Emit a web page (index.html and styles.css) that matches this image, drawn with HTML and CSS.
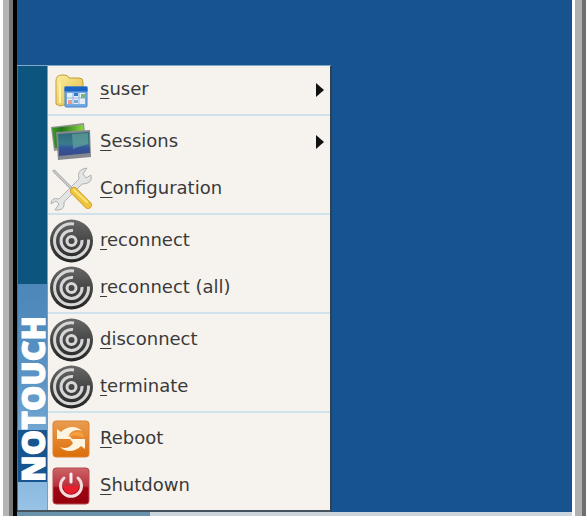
FILE: index.html
```html
<!DOCTYPE html>
<html lang="en">
<head>
<meta charset="utf-8">
<title>NoTouch desktop menu</title>
<link rel="stylesheet" href="styles.css">
</head>
<body>
<svg class="defs" aria-hidden="true">
  <defs>
    <linearGradient id="dark" x1="0" y1="0" x2="0" y2="1"><stop offset="0" stop-color="#686868"/><stop offset="1" stop-color="#242424"/></linearGradient>
    <linearGradient id="folder" x1="0" y1="0" x2="1" y2="1"><stop offset="0" stop-color="#fbefa0"/><stop offset="1" stop-color="#dfb73e"/></linearGradient>
    <linearGradient id="green" x1="0" y1="0" x2="1" y2="0"><stop offset="0" stop-color="#3d9a2c"/><stop offset=".3" stop-color="#237616"/><stop offset="1" stop-color="#90d64c"/></linearGradient>
    <linearGradient id="screen" x1="0" y1="0" x2="0" y2="1"><stop offset="0" stop-color="#2f6878"/><stop offset=".5" stop-color="#3a7c8c"/><stop offset=".65" stop-color="#31559a"/><stop offset="1" stop-color="#3a4a8a"/></linearGradient>
    <linearGradient id="orange" x1="0" y1="0" x2="0" y2="1"><stop offset="0" stop-color="#ea9c50"/><stop offset="1" stop-color="#dd6e0a"/></linearGradient>
    <linearGradient id="red" x1="0" y1="0" x2="0" y2="1"><stop offset="0" stop-color="#cc6468"/><stop offset=".5" stop-color="#b9303c"/><stop offset=".55" stop-color="#9d0512"/><stop offset="1" stop-color="#96000c"/></linearGradient>
    <symbol id="receiver" viewBox="0 0 44 44">
      <circle cx="21.500" cy="22" r="21.500" fill="url(#dark)"/>
      <g fill="none" stroke="#d6d6d6" stroke-width="3">
        <circle cx="21.500" cy="22" r="4.500"/>
        <path d="M23 11.500A10.500 10.500 0 1 0 32 21"/>
        <path d="M24 5A17 17 0 1 0 38.500 20.500"/>
      </g>
    </symbol>
  </defs>
</svg>
<div class="screen">
  <main class="desktop">
    <nav class="menu" aria-label="Desktop menu">
      <div class="brand"><span class="brand-text"><span class="brand-no">NO</span>TOUCH</span></div>
      <div class="items">
        <div class="group">
          <button class="item" aria-haspopup="menu">
            <svg class="icon" viewBox="0 0 44 44" aria-hidden="true">
              <path d="M6 36V13q0-6 6-6h2q4 0 5 3h10q4 0 4 4v18L10 38z" fill="url(#folder)" stroke="#c69b36"/>
              <path d="M10 15V35" stroke="#fff1a0" stroke-width="2"/>
              <rect x="15" y="19" width="22" height="20" rx="1" fill="#72a9e2" stroke="#4686cd"/>
              <path d="M14.500 18.500h23v5h-23z" fill="#1c64c4"/>
              <path d="M17 25h18v11H17z" fill="#e5eef8"/>
              <path d="M23 25v11M29 25v11M17 30h18" stroke="#8fb6df" stroke-width="1"/>
              <path d="M18 32h4v4h-4z" fill="#e79b91"/><path d="M31 26h4v4h-4z" fill="#7bb57b"/><path d="M24 25h4v3h-4z" fill="#397ac5"/><path d="M24 32h4v3h-4z" fill="#7aa6d9"/>
            </svg>
            <span class="label"><u>s</u>user</span><span class="arrow"></span>
          </button>
        </div>
        <div class="group">
          <button class="item" aria-haspopup="menu">
            <svg class="icon" viewBox="0 0 44 44" aria-hidden="true">
              <path d="M1 7L34 3l2 23L4 31z" fill="#8f938b"/>
              <path d="M2 8L33 5l1 18L5 28z" fill="url(#green)"/>
              <path d="M6 12L40 10l1 27L8 40z" fill="#84888f"/>
              <path d="M8 14L39 12l1 21L9 36z" fill="url(#screen)"/>
              <path d="M22 14l16-1v11q-8 2-15 5z" fill="#69a99e" opacity=".6"/>
            </svg>
            <span class="label"><u>S</u>essions</span><span class="arrow"></span>
          </button>
          <button class="item">
            <svg class="icon" viewBox="0 0 44 44" aria-hidden="true">
              <path d="M9 32L29 12q-2-8 4-10l4-1-4 6 3 4 5-3q2 9-9 9L14 35q1 7-5 8l-4 0 4-6-3-3-5 3q0-7 8-5z" fill="#e3e4e4" stroke="#b0b2b2"/>
              <path d="M4 4L22 22" stroke="#b0b0b0" stroke-width="3" stroke-linecap="round"/>
              <path d="M4 4L22 22" stroke="#d5d5d5" stroke-width="1" stroke-linecap="round"/>
              <path d="M24 24L38 38" stroke="#d9a637" stroke-width="8" stroke-linecap="round"/>
              <path d="M24 24L38 38" stroke="#f0c53e" stroke-width="6" stroke-linecap="round"/>
              <path d="M24 23L37 35" stroke="#fae47d" stroke-width="2" stroke-linecap="round"/>
            </svg>
            <span class="label"><u>C</u>onfiguration</span>
          </button>
        </div>
        <div class="group">
          <button class="item"><svg class="icon" aria-hidden="true"><use href="#receiver"/></svg><span class="label"><u>r</u>econnect</span></button>
          <button class="item"><svg class="icon" aria-hidden="true"><use href="#receiver"/></svg><span class="label"><u>r</u>econnect (all)</span></button>
        </div>
        <div class="group">
          <button class="item"><svg class="icon" aria-hidden="true"><use href="#receiver"/></svg><span class="label"><u>d</u>isconnect</span></button>
          <button class="item"><svg class="icon" aria-hidden="true"><use href="#receiver"/></svg><span class="label"><u>t</u>erminate</span></button>
        </div>
        <div class="group">
          <button class="item">
            <svg class="icon" viewBox="0 0 44 44" aria-hidden="true">
              <rect x="3" y="4" width="36" height="36" rx="3" fill="url(#orange)" stroke="#d98332"/>
              <path d="M7 12l4 3c6-6 15-7 21-1-5-2-10-1-13 4l3 4H7z" fill="#fff4df"/>
              <path d="M35 32l-4-3c-6 6-15 7-21 1 5 2 10 1 13-4l-3-4h15z" fill="#fff4df"/>
              <path d="M18 20c3-5 9-6 14-4 2 2 2 4 1 5-4-3-9-3-15-1z" fill="#f5a03e"/>
            </svg>
            <span class="label"><u>R</u>eboot</span>
          </button>
          <button class="item">
            <svg class="icon" viewBox="0 0 44 44" aria-hidden="true">
              <rect x="3" y="4" width="36" height="36" rx="3" fill="url(#red)" stroke="#b54b52"/>
              <path d="M13 22h16a8 8 0 0 1-16 0z" fill="#e5202c"/>
              <path d="M14 14a10.500 10.500 0 1 0 14 0" fill="none" stroke="#f3dcdd" stroke-width="3" stroke-linecap="round"/>
              <path d="M21 10v8" stroke="#fbeeee" stroke-width="3" stroke-linecap="round"/>
            </svg>
            <span class="label"><u>S</u>hutdown</span>
          </button>
        </div>
      </div>
    </nav>
  </main>
  <footer class="taskbar"><div class="task"></div></footer>
</div>
</body>
</html>
```

FILE: styles.css
```css
* { box-sizing: border-box; }

body {
  margin: 0;
  background: #fff;
  font-family: "DejaVu Sans", sans-serif;
}

.defs {
  position: absolute;
  width: 0;
  height: 0;
}

.screen {
  display: flex;
  flex-direction: column;
  min-height: 100vh;
  padding: 0 14px 0 17px;
  background:
    linear-gradient(90deg, #fff 3px, #b4b4b4 3px 9px, #777 9px 13px, #000 13px 17px, transparent 17px) left / 17px 100% no-repeat,
    linear-gradient(90deg, #fff 3px, #b0b0b0 3px 10px, #6e6e6e 10px) right / 14px 100% no-repeat;
}

.desktop {
  flex: 1;
  display: flex;
  align-items: flex-end;
  background: #17548f;
}

.menu {
  display: flex;
  width: 315px;
  border-top: 1px solid #7fa9c6;
  border-right: 2px solid #2d4354;
  border-bottom: 2px solid #45545c;
}

.brand {
  display: flex;
  width: 31px;
  padding-bottom: 28px;
  border-left: 1px solid #2f7fa6;
  border-right: 1px solid #6aa5c9;
  background: linear-gradient(#0c557f 49%, #4d87ba 49%, #5a93c4 70%, #98c3e6);
  color: #fff;
  font: 800 32px/29px "Open Sans", sans-serif;
  -webkit-text-stroke: 1px #fff;
}

.brand-text {
  writing-mode: vertical-rl;
  transform: rotate(180deg);
}

.brand-no {
  display: inline-block;
  background: #16558f;
}

.items {
  flex: 1;
  padding-bottom: 1px;
  background: #f6f3ef;
}

.group + .group {
  margin-top: 1px;
  padding-top: 2px;
  border-top: 2px solid #cfe2eb;
}

.item {
  display: flex;
  align-items: center;
  width: 100%;
  height: 47px;
  padding: 0 6px 0 2px;
  border: 0;
  background: none;
  color: #3a3a3a;
  font: 18px/24px "DejaVu Sans", sans-serif;
  text-align: left;
}

.icon {
  flex: none;
  width: 44px;
  height: 44px;
}

.label {
  flex: 1;
  padding: 0 0 2px 6px;
}

.label u {
  text-underline-offset: 3px;
}

.arrow {
  border: 7px solid transparent;
  border-left: 8px solid #111;
  border-right: 0;
}

.taskbar {
  height: 4px;
  background: #ccd5db;
}

.task {
  width: 24%;
  height: 100%;
  background: #6993aa;
}
```
